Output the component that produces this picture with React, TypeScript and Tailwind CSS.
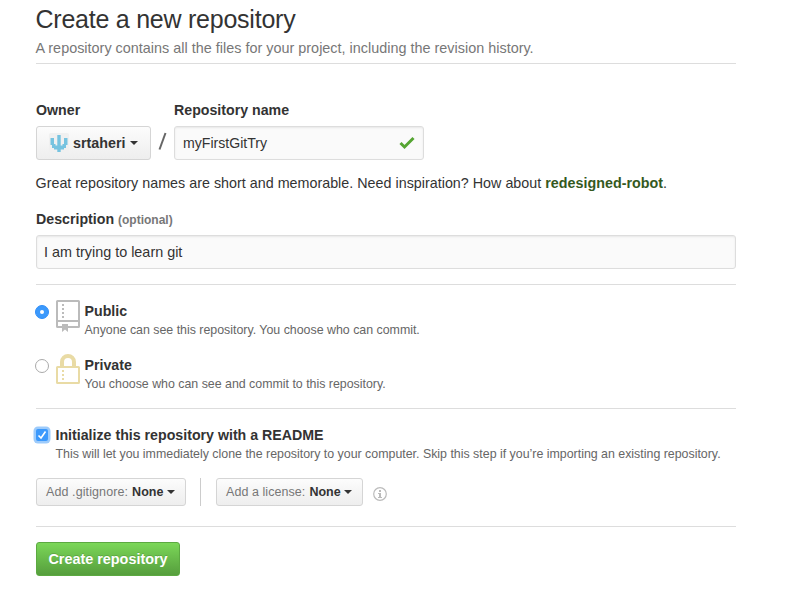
import type { ReactNode } from "react";

function Caret() {
  return (
    <span className="h-0 w-0 shrink-0 border-x-4 border-t-4 border-x-transparent border-t-[#333]" />
  );
}

function Rule() {
  return <hr className="h-px w-full border-0 bg-[#ddd]" />;
}

function GrayButton({ className, children }: { className: string; children: ReactNode }) {
  return (
    <button
      className={
        "flex shrink-0 items-center rounded-[3px] border border-[#d5d5d5] bg-linear-to-b from-[#fcfcfc] to-[#eee] whitespace-nowrap " +
        className
      }
    >
      {children}
    </button>
  );
}

function Avatar() {
  return (
    <svg width="20" height="20" viewBox="0 0 20 20">
      <rect width="20" height="20" rx="2" fill="#f0f0f0" />
      <path
        fill="#76c3e0"
        d="M8.300 2h3.400v10.500h1.800V11H15V5h3.500v7H17v3h-2v1.500h-3.300V19H8.300v-2.500H5V15H3v-3H1.500V5H5v6h1.500v1.500h1.800z"
      />
    </svg>
  );
}

function RepoIcon() {
  return (
    <svg width="24" height="32" viewBox="0 0 24 32" fill="#bbb">
      <path
        fillRule="evenodd"
        d="M1.500 0h21Q24 0 24 1.500v25q0 1.500-1.500 1.500H12v4l-3-2.500L6 32v-4H1.500Q0 28 0 26.500v-25Q0 0 1.500 0zM2 2v18h20V2zM2 22v4h4v-2h6v2h10v-4z"
      />
      <path d="M6 4h2v2H6zM6 8h2v2H6zM6 12h2v2H6zM6 16h2v2H6z" />
    </svg>
  );
}

function LockIcon() {
  return (
    <svg width="24" height="30" viewBox="0 0 24 30" fill="#e9dba5">
      <path d="M4 12V8a8 8 0 0 1 16 0v4h-4V8a4 4 0 0 0-8 0v4z" />
      <path
        fillRule="evenodd"
        d="M1.500 12h21q1.500 0 1.500 1.500v15q0 1.500-1.500 1.500h-21Q0 30 0 28.500v-15Q0 12 1.500 12zM2 14v14h20V14z"
      />
      <path d="M6 16h2v2H6zM6 20h2v2H6zM6 24h2v2H6z" />
    </svg>
  );
}

function Option({
  checked,
  icon,
  title,
  note,
}: {
  checked?: boolean;
  icon: ReactNode;
  title: string;
  note: string;
}) {
  return (
    <label className="flex h-[54px]">
      <span
        className={
          "mt-[5px] -ml-px flex h-[14px] w-[14px] shrink-0 items-center justify-center rounded-full border " +
          (checked ? "border-[#2f8df8] bg-[#3b99fc]" : "border-[#aaa] bg-white")
        }
      >
        {checked && <span className="h-1 w-1 rounded-full bg-white" />}
      </span>
      <span className="ml-[7px] w-6 shrink-0">{icon}</span>
      <span className="ml-[4.500px] flex flex-col pt-px whitespace-nowrap">
        <span className="text-[14.200px] leading-5 font-bold">{title}</span>
        <span className="text-[12.400px] leading-[18px] tracking-[-0.010px] text-[#666]">{note}</span>
      </span>
    </label>
  );
}

export default function App() {
  return (
    <main className="h-[593px] w-[790px] overflow-hidden bg-white pl-9 font-['Liberation_Sans',Arial,sans-serif] text-[#333]">
      <div className="flex w-[700px] flex-col whitespace-nowrap">
        <header className="flex h-16 flex-col pt-1">
          <h1 className="-ml-[0.500px] text-[25px] leading-[30px] tracking-[-0.240px]">Create a new repository</h1>
          <p className="-ml-[0.500px] mt-[3px] mb-[3px] text-[14.400px] leading-[23px] tracking-[0.010px] text-[#777]">
            A repository contains all the files for your project, including the revision history.
          </p>
          <Rule />
        </header>

        <div className="mt-9 flex">
          <div className="w-[115px]">
            <div className="h-[26px] text-[14.200px] leading-5 font-bold">Owner</div>
            <GrayButton className="h-[34px] w-[115px] pl-3 text-[14.300px] font-bold">
              <Avatar />
              <span className="mr-[5px] ml-1 pt-0.5">srtaheri</span>
              <Caret />
            </GrayButton>
          </div>
          <svg width="23" height="60" viewBox="0 0 23 60">
            <path d="M8.500 49.500 14.500 33" stroke="#666" strokeWidth="2" />
          </svg>
          <div>
            <div className="h-[26px] text-[14.200px] leading-5 font-bold">Repository name</div>
            <div className="flex h-[34px] w-[250px] items-center justify-between rounded-[3px] border border-[#ddd] bg-[#fafafa] pr-2 pl-2 text-[14.100px] shadow-[inset_0_1px_2px_rgba(0,0,0,0.075)]">
              <span className="pt-0.5">myFirstGitTry</span>
              <svg width="16" height="14" viewBox="0 0 16 14">
                <path d="M1.500 7 5.500 11 14.500 2" fill="none" stroke="#55a532" strokeWidth="3" />
              </svg>
            </div>
          </div>
        </div>

        <p className="-ml-[0.500px] mt-[13px] text-[14.300px] leading-5 tracking-[0.015px]">
          Great repository names are short and memorable. Need inspiration? How about{" "}
          <b className="text-[#34591e]">redesigned-robot</b>.
        </p>
        <div className="mt-4 h-[26px] text-[14.200px] leading-5 font-bold">
          Description <span className="text-[12px] text-[#777]">(optional)</span>
        </div>
        <div className="flex h-[34px] items-center rounded-[3px] border border-[#ddd] bg-[#fafafa] pt-0.5 pl-[7px] text-[14.400px] shadow-[inset_0_1px_2px_rgba(0,0,0,0.075)]">
          I am trying to learn git
        </div>

        <div className="mt-[15px]">
          <Rule />
        </div>
        <div className="mt-[15px] h-[108px]">
          <Option
            checked
            icon={<RepoIcon />}
            title="Public"
            note="Anyone can see this repository. You choose who can commit."
          />
          <Option
            icon={<LockIcon />}
            title="Private"
            note="You choose who can see and commit to this repository."
          />
        </div>
        <Rule />

        <label className="mt-4 flex h-[53px]">
          <span className="mt-1 flex h-3 w-3 shrink-0 items-center justify-center rounded-[2px] bg-[#3b99fc] shadow-[0_0_0_2.500px_#9dcbfb]">
            <svg width="10" height="10" viewBox="0 0 10 10">
              <path d="M1.500 5.500 4 8 8.500 1.500" fill="none" stroke="white" strokeWidth="1.600" />
            </svg>
          </span>
          <span className="ml-[7.500px] flex flex-col">
            <span className="text-[14.200px] leading-5 font-bold">Initialize this repository with a README</span>
            <span className="text-[12.400px] leading-[18px] tracking-[-0.005px] text-[#666]">
              This will let you immediately clone the repository to your computer. Skip this step if you’re importing an existing repository.
            </span>
          </span>
        </label>

        <div className="flex h-7 items-center">
          <GrayButton className="h-7 w-[150px] pl-[9px] text-[12.500px]">
            <span className="tracking-[0.100px] text-[#777]">Add .gitignore:</span>
            <b className="mr-1 ml-1">None</b>
            <Caret />
          </GrayButton>
          <span className="mr-[15px] ml-[14px] h-7 w-px bg-[#ccc]" />
          <GrayButton className="h-7 w-[147px] pl-[9px] text-[12.500px]">
            <span className="tracking-[0.060px] text-[#777]">Add a license:</span>
            <b className="mr-[3px] ml-1">None</b>
            <Caret />
          </GrayButton>
          <svg className="mt-1 ml-[10px]" width="14" height="14" viewBox="0 0 14 14">
            <circle cx="7" cy="7" r="6.300" fill="none" stroke="#bbb" strokeWidth="1.200" />
            <path d="M6 3h2v2H6zM5 6h3v4h1v1H5v-1h1V7H5z" fill="#bbb" />
          </svg>
        </div>

        <div className="mt-5">
          <Rule />
        </div>
        <button className="mt-[15px] h-[34px] w-36 rounded-[3px] border border-[#5ca941] bg-linear-to-b from-[#7bd758] to-[#569e3d] pt-0.5 text-[14.400px] font-bold text-white [text-shadow:0_-1px_0_rgba(0,0,0,0.15)]">
          Create repository
        </button>
      </div>
    </main>
  );
}
